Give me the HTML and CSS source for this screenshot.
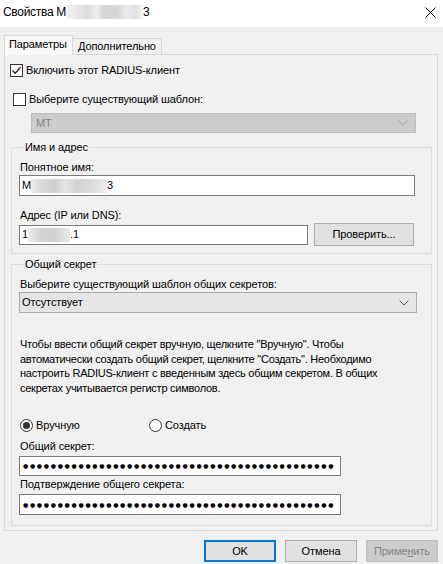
FILE: index.html
```html
<!DOCTYPE html>
<html lang="ru">
<head>
<meta charset="utf-8">
<title>Свойства</title>
<link rel="stylesheet" href="styles.css">
</head>
<body>
<div class="window">
  <div class="titlebar">
    <div class="title">Свойства M<span class="blur blur-title"></span>3</div>
    <svg class="close" width="11" height="11" viewBox="0 0 11 11"><path d="M0.5 0.5 L10.5 10.5 M10.5 0.5 L0.5 10.5" stroke="#000" stroke-width="1" fill="none"/></svg>
  </div>
  <div class="content">
    <div class="tabs">
      <div class="tab tab-active">Параметры</div>
      <div class="tab tab-other">Дополнительно</div>
    </div>
    <div class="panel">
      <label class="check check-1">
        <span class="box"><svg width="11" height="11" viewBox="0 0 11 11"><path d="M1.5 5.5 L4.2 8.3 L9.6 2.3" stroke="#222" stroke-width="1.3" fill="none"/></svg></span>
        <span>Включить этот RADIUS-клиент</span>
      </label>
      <label class="check check-2">
        <span class="box"></span>
        <span>Выберите существующий шаблон:</span>
      </label>
      <div class="select select-disabled">
        <span>MT</span>
        <svg width="10" height="6" viewBox="0 0 10 6"><path d="M0.5 0.5 L5 5 L9.5 0.5" stroke="#a6a6a6" stroke-width="1" fill="none"/></svg>
      </div>

      <fieldset class="group group-1">
        <legend>Имя и адрес</legend>
        <div class="lbl lbl-first">Понятное имя:</div>
        <div class="input input-name">M<span class="blur blur-name"></span>3</div>
        <div class="lbl lbl-addr">Адрес (IP или DNS):</div>
        <div class="addr-row">
          <div class="input input-addr">1<span class="blur blur-addr"></span>.1</div>
          <div class="btn btn-check">Проверить...</div>
        </div>
      </fieldset>

      <fieldset class="group group-2">
        <legend>Общий секрет</legend>
        <div class="lbl lbl-first">Выберите существующий шаблон общих секретов:</div>
        <div class="select select-secret">
          <span>Отсутствует</span>
          <svg width="10" height="6" viewBox="0 0 10 6"><path d="M0.5 0.5 L5 5 L9.5 0.5" stroke="#606060" stroke-width="1" fill="none"/></svg>
        </div>
        <p class="info">Чтобы ввести общий секрет вручную, щелкните "Вручную". Чтобы<br>автоматически создать общий секрет, щелкните "Создать". Необходимо<br>настроить RADIUS-клиент с введенным здесь общим секретом. В общих<br>секретах учитывается регистр символов.</p>
        <div class="radios">
          <label class="radio radio-manual"><span class="circle circle-on"></span><span>Вручную</span></label>
          <label class="radio radio-create"><span class="circle"></span><span>Создать</span></label>
        </div>
        <div class="lbl lbl-secret">Общий секрет:</div>
        <div class="input input-pass"><span class="dots">●●●●●●●●●●●●●●●●●●●●●●●●●●●●●●●●●●●●●●●●●●●●●</span></div>
        <div class="lbl lbl-confirm">Подтверждение общего секрета:</div>
        <div class="input input-pass input-pass-2"><span class="dots">●●●●●●●●●●●●●●●●●●●●●●●●●●●●●●●●●●●●●●●●●●●●●</span></div>
      </fieldset>
    </div>
    <div class="footer">
      <div class="btn btn-default">OK</div>
      <div class="btn">Отмена</div>
      <div class="btn btn-disabled">Приме<u>н</u>ить</div>
    </div>
  </div>
</div>
</body>
</html>
```

FILE: styles.css
```css
* { box-sizing: border-box; }
html, body { margin: 0; padding: 0; }
body {
  width: 443px;
  height: 564px;
  overflow: hidden;
  background: #f0f0f0;
  font-family: "Liberation Sans", Arial, sans-serif;
  font-size: 11px;
  letter-spacing: -0.1px;
  color: #000;
}
.window { width: 443px; height: 564px; display: flex; flex-direction: column; }

.titlebar {
  height: 27px;
  background: #fff;
  display: flex;
  align-items: center;
  justify-content: space-between;
  padding: 0 7px 3px 3px;
}
.title { display: flex; align-items: center; line-height: 15px; font-size: 12px; letter-spacing: -0.3px; }
.close { display: block; }

.blur { display: inline-block; height: 14px; vertical-align: middle; }
.blur-title {
  width: 77px;
  background: linear-gradient(90deg, #f3f3f3 0, #e6e6e6 12px, #dcdcdc 22px, #eeeeee 30px, #d4d4d4 38px, #d6d6d6 52px, #ebebeb 60px, #e2e2e2 70px, #f4f4f4 77px);
}
.blur-name {
  width: 76px;
  background: linear-gradient(90deg, #ececec 0, #dadada 10px, #cfcfcf 24px, #e6e6e6 34px, #d2d2d2 46px, #dcdcdc 60px, #ececec 76px);
}
.blur-addr {
  width: 42px;
  background: linear-gradient(90deg, #ebebeb 0, #d4d4d4 12px, #d0d0d0 26px, #e8e8e8 42px);
}

.content { padding: 8px 5px 0 4px; display: flex; flex-direction: column; }

.tabs { display: flex; align-items: flex-end; height: 19px; }
.tab {
  height: 16px;
  border: 1px solid #d9d9d9;
  border-bottom: none;
  border-left: none;
  background: #f0f0f0;
  line-height: 15px;
  white-space: nowrap;
}
.tab-other { width: 89px; padding-left: 5px; }
.tab-active {
  height: 20px;
  margin-bottom: -1px;
  border-left: 1px solid #d9d9d9;
  background: #f9f9f9;
  width: 69px;
  padding: 0 0 0 4px;
  line-height: 17px;
  position: relative;
  z-index: 1;
}

.panel {
  height: 477px;
  border: 1px solid #d9d9d9;
  background: #f0f0f0;
  display: flex;
  flex-direction: column;
  align-items: flex-start;
}

.check { display: flex; align-items: center; line-height: 15px; gap: 3px; }
.check-1 { margin: 8px 0 0 5px; }
.check-2 { margin: 14px 0 0 8px; gap: 3px; }
.box {
  width: 13px; height: 13px;
  border: 1px solid #333;
  background: #fff;
  display: flex; align-items: center; justify-content: center;
}
.box svg { display: block; }

.select {
  display: flex;
  align-items: center;
  justify-content: space-between;
  height: 21px;
  padding: 0 7px 0 4px;
  line-height: 15px;
}
.select svg { display: block; }
.select-disabled {
  margin: 6px 0 0 26px;
  width: 385px;
  height: 20px;
  background: #cccccc;
  border: 1px solid #bfbfbf;
  color: #838383;
}

.group {
  margin: 7px 0 0 6px;
  padding: 0;
  width: 421px;
  border: 1px solid #dcdcdc;
  min-inline-size: 0;
}
.group legend {
  margin-left: 5px;
  padding: 0 1px;
  line-height: 15px;
  color: #000;
}
.group-1 { padding: 0 0 7px 7px; }
.group-2 { margin-top: 3px; padding: 0 0 10px 7px; }

.lbl { line-height: 15px; padding-left: 1px; }
.lbl-first { margin-top: 5px; }
.lbl-addr { margin-top: 12px; }

.input {
  background: #fff;
  border: 1px solid #7a7a7a;
  height: 21px;
  display: flex;
  align-items: center;
  padding-left: 2px;
  line-height: 15px;
}
.input-name { width: 396px; }
.addr-row { display: flex; align-items: center; margin-top: 0; }
.input-addr { width: 289px; height: 20px; }

.btn {
  height: 22px;
  width: 72px;
  background: #e1e1e1;
  border: 1px solid #adadad;
  display: flex;
  align-items: center;
  justify-content: center;
  line-height: 15px;
  white-space: nowrap;
}
.btn-check { width: 100px; height: 23px; margin-left: 6px; }

.select-secret {
  width: 398px;
  background: #e5e5e5;
  border: 1px solid #acacac;
  padding-left: 2px;
}
.info {
  margin: 24px 0 0 1px;
  width: 410px;
  line-height: 14.5px;
  letter-spacing: -0.25px;
  white-space: nowrap;
}
.radios { display: flex; margin-top: 23px; height: 15px; align-items: center; }
.radio { display: flex; align-items: center; gap: 3px; line-height: 15px; }
.radio-manual { margin-left: 1px; width: 129px; }
.circle {
  width: 13px; height: 13px;
  border: 1px solid #333;
  border-radius: 50%;
  background: #fff;
  display: flex; align-items: center; justify-content: center;
}
.circle-on::after {
  content: "";
  width: 7px; height: 7px;
  border-radius: 50%;
  background: #333;
}
.lbl-secret { margin-top: 6px; }
.lbl-confirm { margin-top: 1px; }
.input-pass { width: 322px; height: 20px; margin-top: 2px; padding-left: 3px; }
.input-pass-2 { height: 21px; margin-top: 2px; }
.dots {
  font-family: "DejaVu Sans", sans-serif;
  font-size: 6px;
  letter-spacing: 1.7px;
  white-space: nowrap;
  line-height: 10px;
}

.footer {
  display: flex;
  justify-content: flex-end;
  gap: 9px;
  margin-top: 9px;
  padding-right: 0;
}
.btn-default { border: 2px solid #0078d7; }
.btn-disabled { background: #cccccc; border-color: #bfbfbf; color: #838383; }
.btn-disabled u { text-decoration-thickness: 1px; text-underline-offset: 1px; }
```
